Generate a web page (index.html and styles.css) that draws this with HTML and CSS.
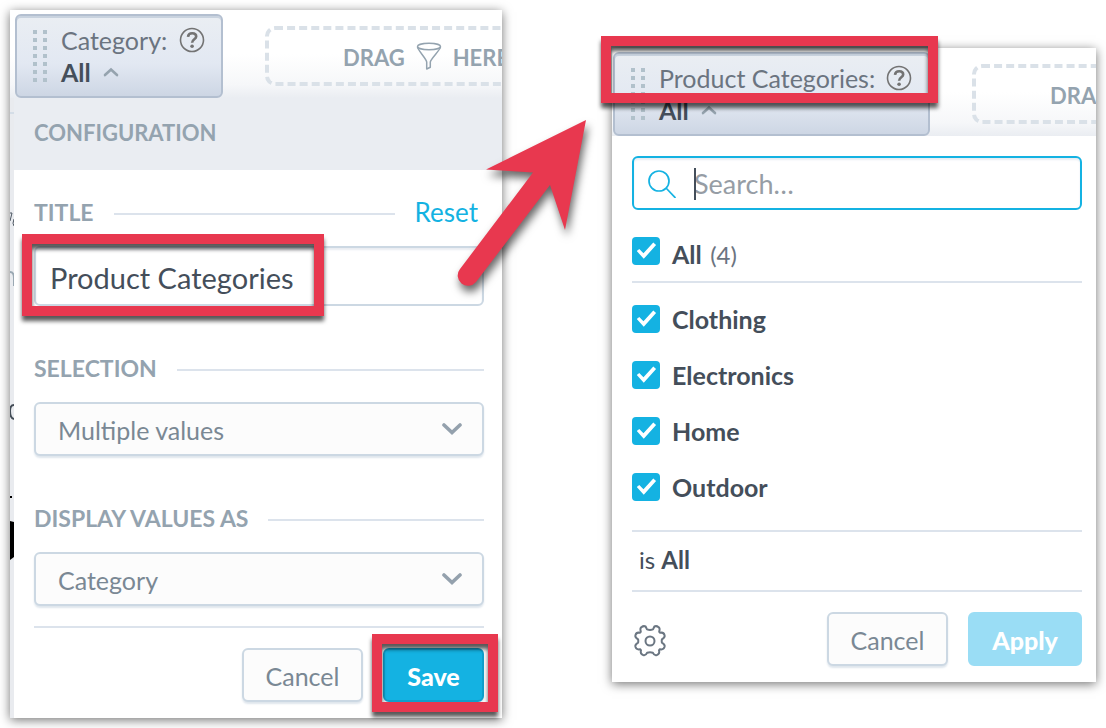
FILE: index.html
```html
<!DOCTYPE html>
<html lang="en">
<head>
<meta charset="utf-8">
<meta name="viewport" content="width=device-width, initial-scale=1">
<title>Filter configuration</title>
<link rel="stylesheet" href="styles.css">
</head>
<body>
<svg class="sprite" aria-hidden="true">
  <symbol id="grip" viewBox="0 0 14 52">
    <path d="M2 0V52M12 0V52" fill="none" stroke="#b1c1cb" stroke-width="4" stroke-dasharray="4 4"/>
  </symbol>
  <symbol id="help" viewBox="0 0 26 26">
    <circle cx="13" cy="13" r="11.5" fill="none" stroke="#737373" stroke-width="1.6"/>
    <path d="M9 9.800C9.200 7.400 10.900 6.200 13.200 6.200C15.600 6.200 17.200 7.500 17.200 9.500C17.200 12.300 13.100 12.300 13.100 15.700" fill="none" stroke="#737373" stroke-width="2.600"/>
    <circle cx="13.100" cy="19.300" r="1.800" fill="#737373"/>
  </symbol>
  <symbol id="caret-up" viewBox="0 0 16 10">
    <path d="M2 8L8 2.500L14 8" fill="none" stroke="#95a3ae" stroke-width="2.600" stroke-linecap="round"/>
  </symbol>
  <symbol id="chevron" viewBox="0 0 20 12">
    <path d="M2 2L10 9.500L18 2" fill="none" stroke="#94a1ad" stroke-width="3.600" stroke-linecap="round"/>
  </symbol>
  <symbol id="funnel" viewBox="0 0 26 28">
    <g fill="none" stroke="#94a3af" stroke-width="1.500" stroke-linejoin="round">
      <ellipse cx="13" cy="4.500" rx="11.500" ry="3.200"/>
      <path d="M1.500 5C1.700 8 10.500 17 10.700 20V27L14.300 25.300V20C14.500 17 24.200 8 24.500 5"/>
    </g>
  </symbol>
</svg>

<main class="stage">
  <section class="panel" aria-label="Filter configuration">
    <header class="bar bar-inset">
      <div class="tile">
        <svg class="grip" aria-hidden="true"><use href="#grip"/></svg>
        <div class="tile-text">
          <div class="tile-line"><span>Category:</span><svg class="help" aria-hidden="true"><use href="#help"/></svg></div>
          <div class="tile-line tile-value"><strong>All</strong><svg class="caret-up" aria-hidden="true"><use href="#caret-up"/></svg></div>
        </div>
      </div>
      <div class="drop-clip"><div class="drop"><span>DRAG</span><svg class="funnel" aria-hidden="true"><use href="#funnel"/></svg><span>HERE</span></div></div>
    </header>
    <div class="layered">
      <svg class="backdrop" viewBox="0 0 4 620" aria-hidden="true">
        <path d="M0 15H4" stroke="#d4dde7" stroke-width="2"/>
        <path d="M0 115H2L0 123M4 121Q2 126 4 128" fill="none" stroke="#4b5560" stroke-width="1"/>
        <path d="M0 174Q4 174 4 180V188" fill="none" stroke="#9aa8b3" stroke-width="2"/>
        <path d="M4 307Q0 307 0 313Q0 320 4 321" fill="none" stroke="#444d57" stroke-width="2"/>
        <path d="M0 398H2V400H0Z" fill="#000"/>
        <path d="M0 423L4 424V459L0 462Z" fill="#000"/>
      </svg>
      <form class="config">
        <h2 class="config-head">CONFIGURATION</h2>
        <div class="config-body">
          <div class="legend"><label for="title">TITLE</label><span class="rule"></span><a class="reset" href="#reset">Reset</a></div>
          <div class="control">
            <input class="text-box" id="title" type="text" value="Product Categories">
            <span class="mark mark-title"></span>
          </div>
          <div class="legend"><label for="selection">SELECTION</label><span class="rule"></span></div>
          <div class="control">
            <select class="select" id="selection"><option>Multiple values</option><option>Single value</option></select>
            <svg class="chevron" aria-hidden="true"><use href="#chevron"/></svg>
          </div>
          <div class="legend"><label for="display">DISPLAY VALUES AS</label><span class="rule"></span></div>
          <div class="control">
            <select class="select" id="display"><option>Category</option></select>
            <svg class="chevron" aria-hidden="true"><use href="#chevron"/></svg>
          </div>
          <div class="actions">
            <button class="button" type="button">Cancel</button>
            <span class="marked"><button class="button button-save" type="button">Save</button><span class="mark mark-save"></span></span>
          </div>
        </div>
      </form>
    </div>
  </section>

  <section class="panel panel-result" aria-label="Product Categories filter">
    <header class="bar">
      <div class="tile tile-wide">
        <svg class="grip" aria-hidden="true"><use href="#grip"/></svg>
        <div class="tile-text">
          <div class="tile-line"><span>Product Categories:</span><svg class="help" aria-hidden="true"><use href="#help"/></svg></div>
          <div class="tile-line tile-value"><strong>All</strong><svg class="caret-up" aria-hidden="true"><use href="#caret-up"/></svg></div>
        </div>
        <span class="mark mark-tile"></span>
      </div>
      <div class="drop-clip"><div class="drop"><span>DRAG</span></div></div>
    </header>
    <form class="filter">
      <div class="search">
        <svg class="search-icon" viewBox="0 0 28 28" aria-hidden="true"><g fill="none" stroke="#14b2e2" stroke-width="1.700"><circle cx="11" cy="11" r="10"/><path d="M18 18L27.500 28"/></g></svg>
        <span class="cursor"></span>
        <input class="search-box" type="text" placeholder="Search…" aria-label="Search">
      </div>
      <label class="check check-all"><input type="checkbox" checked><span class="check-text"><b>All</b> <span class="count">(4)</span></span></label>
      <div class="values">
        <label class="check"><input type="checkbox" checked><b>Clothing</b></label>
        <label class="check"><input type="checkbox" checked><b>Electronics</b></label>
        <label class="check"><input type="checkbox" checked><b>Home</b></label>
        <label class="check"><input type="checkbox" checked><b>Outdoor</b></label>
      </div>
      <p class="summary">is <b>All</b></p>
      <div class="actions actions-filter">
        <button class="gear" type="button" aria-label="Settings">
          <svg viewBox="0 0 36 36" aria-hidden="true"><g fill="none" stroke="#6b7682" stroke-width="2" stroke-linejoin="round"><circle cx="18" cy="18" r="4.500"/><path d="M15.0 6.4Q18.0 7.4 21.0 6.4L22.4 3.5Q24.5 2.5 26.600 4.200Q28.300 5.200 27.200 8.800Q27.500 9.300 28.300 9.800Q31.500 8.900 32.600 12.200Q33.200 14.300 29.900 16.300Q29.500 18.000 29.900 19.700Q33.200 21.700 32.600 23.800Q31.500 27.100 28.000 26.200Q27.300 26.600 27.000 27.300Q28.100 30.800 24.800 32.100Q22.300 33.000 20.800 29.700Q18.000 28.700 15.200 29.700Q13.700 33.000 11.200 32.100Q7.900 30.800 9.000 27.300Q8.700 26.600 8.000 26.200Q4.500 27.100 3.400 23.800Q2.800 21.700 6.100 19.700Q6.500 18.000 6.100 16.300Q2.800 14.300 3.400 12.200Q4.500 8.900 7.700 9.800Q8.500 9.300 8.800 8.800Q7.700 5.200 9.400 4.200Q11.500 2.500 13.600 3.500Z"/></g></svg>
        </button>
        <button class="button" type="button">Cancel</button>
        <button class="button button-apply" type="button" disabled>Apply</button>
      </div>
    </form>
  </section>

  <svg class="arrow" viewBox="450 110 160 190" aria-hidden="true">
    <path d="M586 120L565 230L550 185L476 282A10.300 10.300 0 0 1 460 269L533 172.500L486 169.500Z" fill="#e8384f"/>
  </svg>
</main>
</body>
</html>
```
FILE: styles.css
```css
* { box-sizing: border-box; }

body {
  margin: 0;
  background: #fff;
  color: #444e5a;
  font: 25px/32px Lato, "Noto Sans", sans-serif;
}

button, input, select { font: inherit; color: inherit; margin: 0; }

.sprite { display: none; }

.stage {
  position: relative;
  display: grid;
  grid-template-columns: 492fr 484fr;
  gap: 110px;
  align-items: start;
  padding: 10px;
}

.panel {
  min-width: 0;
  background: #fff;
  box-shadow: 0 2px 10px rgba(0, 0, 0, .55);
}
.panel-result { margin-top: 38px; }

/* top bar */
.bar {
  display: flex;
  gap: 42px;
  height: 88px;
  padding: 4px 0 0 1px;
  background: linear-gradient(#fff 50%, #f6f7f9 85%, #eaedf2);
}
.bar-inset { padding-left: 5px; }

.tile {
  position: relative;
  display: flex;
  flex: none;
  gap: 14px;
  width: 208px;
  padding: 8px 16px;
  border: 2px solid #b3bfd0;
  border-radius: 6px;
  background: linear-gradient(#eaeef3, #e2e8f2 60%, #cdd6e4);
  box-shadow: inset 0 2px 0 #c9d3df;
  color: #6b7480;
}
.tile-wide { width: 317px; }
.grip { flex: none; width: 14px; height: 52px; margin-top: 6px; }
.tile-text { flex: 1; white-space: nowrap; }
.tile-line { display: flex; align-items: center; justify-content: space-between; }
.tile-value { justify-content: flex-start; gap: 12px; color: #444e5a; }
.help { width: 26px; height: 26px; }
.caret-up { width: 16px; height: 10px; }

.drop-clip { flex: 1; min-width: 0; overflow: hidden; padding-top: 12px; }
.drop {
  display: flex;
  align-items: center;
  gap: 11px;
  width: 330px;
  height: 60px;
  padding: 4px 0 0 74px;
  border: 4px dashed #dae1e8;
  border-radius: 10px;
  color: #94a3af;
  font-size: 22px;
  font-weight: 700;
}
.funnel { flex: none; width: 26px; height: 28px; margin-bottom: 4px; }

/* configuration panel */
.layered { display: flex; background: #e9ebef; }
.backdrop { flex: none; width: 4px; height: 620px; }
.config { flex: 1; min-width: 0; background: #fff; }
.config-head {
  margin: 0;
  height: 72px;
  padding: 19px 20px;
  background: #eaedf2;
  color: #94a3af;
  font-size: 22px;
}
.config-body { padding: 30px 18px 16px 20px; }

.legend {
  display: flex;
  align-items: center;
  gap: 20px;
  height: 28px;
  margin-bottom: 18px;
  color: #94a3af;
  font-size: 23px;
  font-weight: 700;
}
.legend label, .reset { padding-bottom: 4px; }
.control + .legend { margin-top: 50px; }
.rule { flex: 1; height: 2px; background: #dce3ec; }
.reset {
  padding-right: 6px;
  color: #14b2e2;
  font-size: 26px;
  font-weight: 400;
  text-decoration: none;
}

.control { position: relative; display: flex; }
.text-box {
  flex: 1;
  width: 100%;
  height: 60px;
  padding: 2px 14px 0;
  border: 2px solid #ccd8e3;
  border-radius: 6px;
  background: #fff;
  box-shadow: inset 0 2px 2px #e9edf2;
  font-size: 29px;
}
.select {
  flex: 1;
  width: 100%;
  height: 54px;
  padding: 2px 22px 0;
  border: 2px solid #ccd8e3;
  border-radius: 6px;
  background: #fcfcfc;
  box-shadow: 0 2px 2px #dfe6ed;
  color: #7a8894;
  appearance: none;
}
.chevron {
  position: absolute;
  right: 22px;
  top: 21px;
  width: 20px;
  height: 12px;
  pointer-events: none;
}

.actions {
  display: flex;
  justify-content: flex-end;
  gap: 20px;
  margin-top: 20px;
  padding-top: 20px;
  border-top: 2px solid #dce3ec;
}
.button {
  height: 54px;
  min-width: 121px;
  padding: 2px 16px 0;
  border: 2px solid #ccd8e3;
  border-radius: 6px;
  background: #fcfcfc;
  box-shadow: 0 2px 2px #dfe6ed;
  color: #7a8894;
}
.button-save {
  min-width: 101px;
  border-color: #0f9fcb;
  background: #14b2e2;
  color: #fff;
  font-weight: 900;
}
.button-apply {
  min-width: 114px;
  border-color: #9addf5;
  background: #9addf5;
  box-shadow: none;
  color: #fff;
  font-weight: 900;
}

/* filter panel */
.filter { padding: 20px 14px 16px 20px; }
.search { position: relative; display: flex; }
.search-box {
  flex: 1;
  width: 100%;
  height: 54px;
  padding: 0 16px 0 60px;
  border: 2px solid #14b2e2;
  border-radius: 6px;
  background: #fff;
  box-shadow: inset 0 2px 2px #e9edf2;
  font-size: 27px;
}
.search-box::placeholder { color: #969da5; opacity: 1; }
.search-icon { position: absolute; left: 16px; top: 14px; width: 28px; height: 28px; }
.cursor { position: absolute; left: 62px; top: 12px; width: 2px; height: 32px; background: #444e5a; }

.check { display: flex; align-items: center; gap: 12px; height: 28px; }
.check input {
  flex: none;
  display: grid;
  width: 28px;
  height: 28px;
  border-radius: 4px;
  background: #14b2e2;
  appearance: none;
}
.check input:checked::after {
  content: "";
  place-self: center;
  width: 28px;
  height: 28px;
  background: #fff;
  clip-path: polygon(17% 50%, 26% 43%, 41% 58%, 76% 20%, 86% 29%, 42% 78%);
}
.check-all { height: 44px; margin-top: 27px; padding-bottom: 16px; }
.check-text { padding-top: 6px; }
.count { margin-left: 2px; color: #6b7480; font-size: 24px; }
.values {
  display: grid;
  gap: 28px;
  padding: 22px 0 29px;
  border: solid #dce3ec;
  border-width: 2px 0;
}
.summary { margin: 0; height: 58px; padding: 12px 7px; font-size: 24px; }
.actions-filter { align-items: center; margin-top: 0; }
.gear {
  width: 36px;
  height: 36px;
  margin-top: 4px;
  margin-right: auto;
  padding: 0;
  border: 0;
  background: none;
}
.gear svg { display: block; width: 36px; height: 36px; }

/* annotations */
.marked { position: relative; display: flex; }
.mark {
  position: absolute;
  border: 10px solid #e8384f;
  filter: drop-shadow(0 5px 2px rgba(0, 0, 0, .65));
  pointer-events: none;
}
.mark-title { left: -12px; top: -12px; width: 302px; bottom: -10px; }
.mark-save { inset: -14px -14px -10px -11px; }
.mark-tile { left: -14px; top: -18px; right: -10px; height: 67px; }
.arrow {
  position: absolute;
  left: 450px;
  top: 110px;
  width: 160px;
  height: 190px;
  overflow: visible;
  filter: drop-shadow(2px 6px 4px rgba(0, 0, 0, .6));
  pointer-events: none;
}
```
